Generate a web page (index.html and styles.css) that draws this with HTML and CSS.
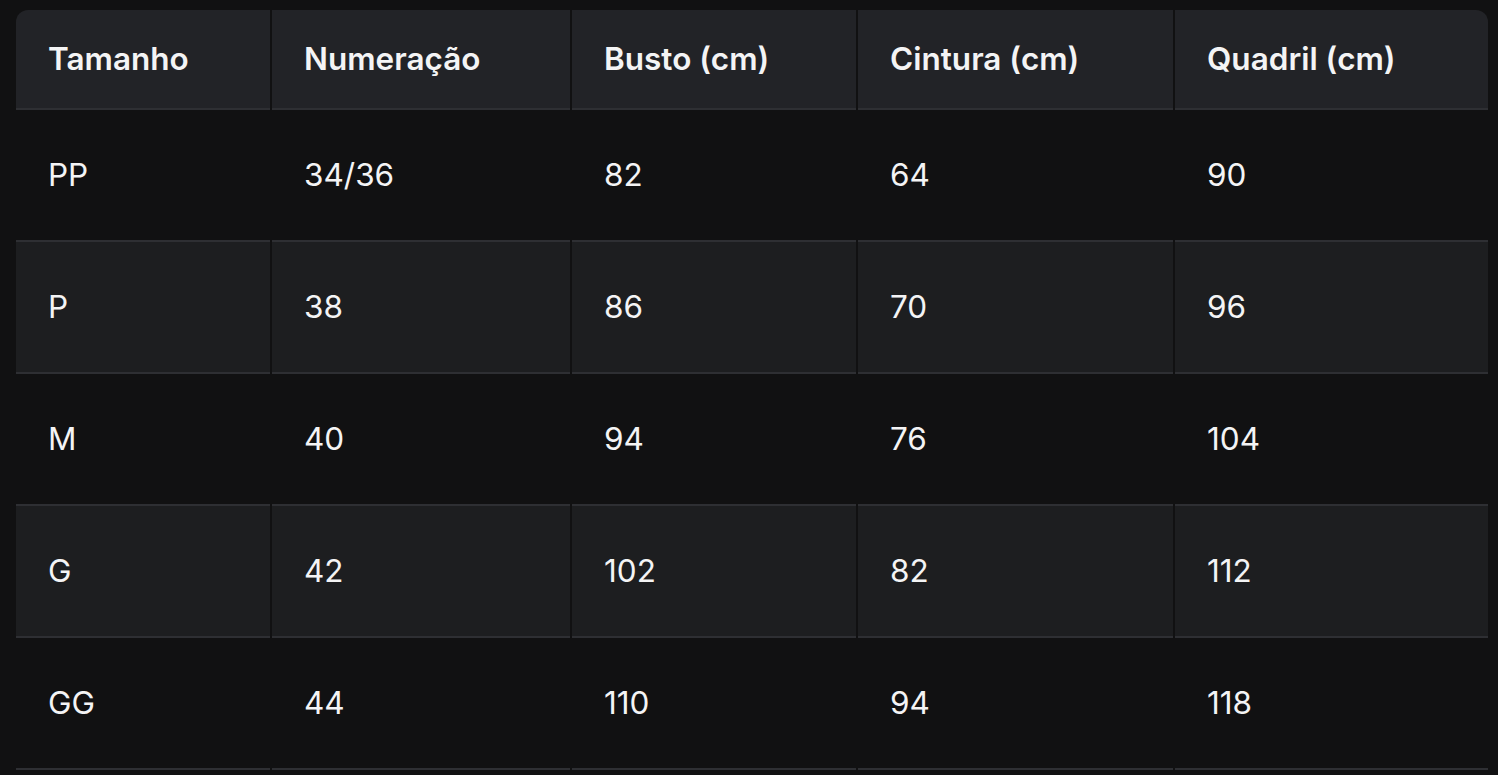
FILE: index.html
```html
<!DOCTYPE html>
<html lang="pt-BR">
<head>
<meta charset="utf-8">
<title>Tabela de medidas</title>
<link rel="stylesheet" href="styles.css">
</head>
<body>
<div class="page">
  <div class="table" role="table">
    <div class="row head" role="row">
      <div class="cell" role="columnheader">Tamanho</div>
      <div class="cell" role="columnheader">Numeração</div>
      <div class="cell" role="columnheader">Busto (cm)</div>
      <div class="cell" role="columnheader">Cintura (cm)</div>
      <div class="cell" role="columnheader">Quadril (cm)</div>
    </div>
    <div class="row" role="row">
      <div class="cell">PP</div><div class="cell">34/36</div><div class="cell">82</div><div class="cell">64</div><div class="cell">90</div>
    </div>
    <div class="row alt" role="row">
      <div class="cell">P</div><div class="cell">38</div><div class="cell">86</div><div class="cell">70</div><div class="cell">96</div>
    </div>
    <div class="row" role="row">
      <div class="cell">M</div><div class="cell">40</div><div class="cell">94</div><div class="cell">76</div><div class="cell">104</div>
    </div>
    <div class="row alt" role="row">
      <div class="cell">G</div><div class="cell">42</div><div class="cell">102</div><div class="cell">82</div><div class="cell">112</div>
    </div>
    <div class="row" role="row">
      <div class="cell">GG</div><div class="cell">44</div><div class="cell">110</div><div class="cell">94</div><div class="cell">118</div>
    </div>
  </div>
</div>
</body>
</html>
```
FILE: styles.css
```css
html, body {
  margin: 0;
  background: #111112;
  color: #f4f4f5;
  font-family: Inter, "Noto Sans", "Liberation Sans", sans-serif;
}

.page {
  padding: 10px 10px 0 16px;
}

.table {
  display: flex;
  flex-direction: column;
}

.row {
  display: grid;
  grid-template-columns: 254px 298px 284px 315px 313px;
  column-gap: 2px;
}

.cell {
  padding: 47px 32px;
  font-size: 31.5px;
  line-height: 36px;
  font-weight: 400;
  border-bottom: 2px solid #2e2f33;
  white-space: nowrap;
}

.head .cell {
  background: #222327;
  font-weight: 600;
  padding-top: 31px;
  padding-bottom: 31px;
}

.head .cell:first-child {
  border-top-left-radius: 12px;
}

.head .cell:last-child {
  border-top-right-radius: 12px;
}

.alt .cell {
  background: #1d1e20;
}
```
